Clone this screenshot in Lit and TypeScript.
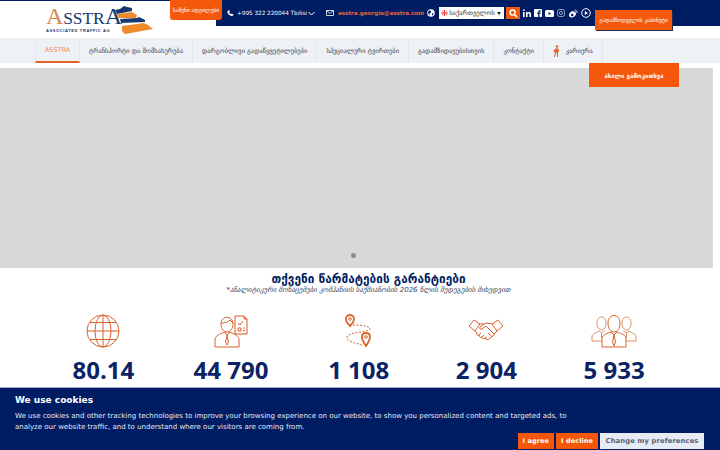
import { LitElement, html, css, svg } from "lit";
import { customElement } from "lit/decorators.js";

const stats = [
  { n: "80.14", i: "globe" },
  { n: "44 790", i: "person" },
  { n: "1 108", i: "route" },
  { n: "2 904", i: "hands" },
  { n: "5 933", i: "team" },
];
const nav = ["ტრანსპორტი და მომსახურება", "დარგობლივი გადაწყვეტილებები", "სპეციალური ტვირთები", "გადამზიდავებისთვის", "კონტაქტი"];

const icons: Record<string, unknown> = {
  globe: svg`<svg width="34" height="34" viewBox="0 0 34 34" fill="none" stroke="#d9622b" stroke-width="1"><circle cx="17" cy="17" r="16"/><ellipse cx="17" cy="17" rx="8" ry="16"/><path d="M17 1v32M1 17h32M4 8.500h26M4 25.500h26"/></svg>`,
  person: svg`<svg width="34" height="34" viewBox="0 0 34 34" fill="none" stroke="#d9622b" stroke-width="1"><path d="M1 33v-7c0-4 4-6 10-8M25 33v-7c0-4-4-6-10-8M1 33h24M11 18l2 4 2-4M13 22l-1.500 6 1.500 3 1.500-3-1.500-6M7 10c0-9 12-9 12 0 0 5-3 8-6 8s-6-3-6-8zM7 9c4 0 8-1 9-3l3 3"/><path d="M21 2h9l3 3v15H21zM30 2v3h3M24 14h3v3h-3zM29 14h2M29 16.500h2M24 9l2 2 3-4" stroke="#e0561c"/></svg>`,
  route: svg`<svg width="27" height="34" viewBox="0 0 27 34" fill="none" stroke="#d9622b" stroke-width="1"><path d="M5 1C2 1 1 3 1 5c0 3 4 7 4 7s4-4 4-7c0-2-1-4-4-4z" stroke-width="1.800"/><circle cx="5" cy="5" r="1.300"/><path d="M8 11c8 0 17 1 17 4s-22 3-23 8 10 6 15 8" stroke-dasharray="2 1.500"/><path d="M21 19c-3 0-4 2-4 4 0 3 4 9 4 9s4-6 4-9c0-2-1-4-4-4z" stroke-width="1.800"/><circle cx="21" cy="23" r="1.300"/></svg>`,
  hands: svg`<svg width="36" height="24" viewBox="0 0 36 24" fill="none" stroke="#d9622b" stroke-width="1"><path d="M1 7l5-6 6 4-5 7zM35 7l-5-6-6 4 5 7zM12 5h4l3-1 5 1M29 12l-3 3-8-8-4 3c-2 1-3-1-2-2l4-3M7 12l2 2M9 14c-1 2 1 3 2 2 0 2 2 3 3 2 0 2 2 2 3 1 1 2 3 2 4 1l6-5M13 14l-2 2M16 16l-2 2M19 18l-2 1M20 14l4 4M23 12l4 4"/></svg>`,
  team: svg`<svg width="46" height="34" viewBox="0 0 46 34" fill="none" stroke="#d9622b" stroke-width="1"><path d="M17 9c0-10 12-10 12 0 0 6-3 9-6 9s-6-3-6-9zM11 33v-9c0-3 4-4 9-6l3 3 3-3c5 2 9 3 9 6v9zM23 21l-1.500 7 1.500 4 1.500-4z"/><path d="M6 9c0-8 9-8 9 0 0 4-2 7-4.500 7S6 13 6 9zM1 27v-5c0-2 4-3 7-5l2.500 2 3-2M10.500 19v5M11 27H1M40 9c0-8-9-8-9 0 0 4 2 7 4.500 7S40 13 40 9zM45 27v-5c0-2-4-3-7-5l-2.500 2-3-2M35.500 19v5M35 27h10" stroke="#dd8c63"/></svg>`,
};

@customElement("app-root")
export class AppRoot extends LitElement {
  static styles = css`
    :host { display: block; width: 720px; height: 450px; overflow: hidden; position: relative; font-family: "DejaVu Sans", "Noto Sans", sans-serif; background: #fff; }
    * { box-sizing: border-box; }
    .header { display: flex; height: 38px; border-top: 1px solid #001d64; }
    .logo { width: 170px; padding: 6px 0 0 46px; flex: none; position: relative; }
    .wordmark { font: 400 17.500px/19px "Liberation Serif", serif; color: #17386f; letter-spacing: -0.1px; display: block; white-space: nowrap; }
    .wordmark b { font-weight: 400; font-size: 24px; }
    .wordmark .a1 { color: #d88a52; }
    .tag { display: block; margin: 1px 0 0 0; font: 700 4px/4px "Liberation Sans", sans-serif; letter-spacing: 0.620px; color: #17386f; white-space: nowrap; }
    .ship { position: absolute; left: 115px; top: 4px; }
    .quote { position: relative; z-index: 1; width: 52px; height: 20px; margin-top: -1px; background: #f4590b; color: #fff; font-size: 5.500px; display: flex; align-items: center; justify-content: center; border-radius: 0 0 3px 3px; flex: none; white-space: nowrap; }
    .right { flex: 1; position: relative; margin-left: -6px; }
    .bar { height: 26px; margin-top: -1px; background: #001d64; display: flex; align-items: center; color: #fff; font-size: 5.700px; white-space: nowrap; padding-left: 11px; }
    .phone { margin-left: 3px; }
    .chev { margin: 1px 0 0 1px; }
    .mail { margin-left: 11px; }
    .email { color: #e0623a; font-weight: 700; font-size: 5.600px; margin-left: 4px; }
    .world { margin-left: 3px; }
    .lang { width: 65px; height: 12px; margin-left: 4px; background: #fff; color: #333; font-size: 6.500px; display: flex; align-items: center; gap: 1px; padding: 0 3px 0 2px; }
    .lang .caret { margin-left: auto; width: 0; height: 0; border: 2.500px solid transparent; border-top: 3px solid #222; border-bottom: 0; }
    .search { width: 14px; height: 12px; margin-left: 2px; background: #f4590b; display: flex; align-items: center; justify-content: center; }
    .socials { display: flex; align-items: center; gap: 3px; margin-left: 3px; }
    .carrier { position: absolute; left: 379px; top: 9px; width: 77px; height: 20px; background: #f4590b; color: #fff; font-size: 5.500px; display: flex; align-items: center; justify-content: center; box-shadow: 1px 1px 0 #222b50; white-space: nowrap; }
    nav { height: 25px; background: #eef1f6; display: flex; padding-left: 35px; font-size: 6.500px; color: #3c4250; }
    nav a { display: flex; align-items: center; gap: 6px; padding: 0 9px; border-right: 1px solid #e3e7ee; white-space: nowrap; }
    nav a.on { color: #e8904f; width: 45px; justify-content: center; padding: 0; border-bottom: 2px solid #e2622a; border-left: 1px solid #e3e7ee; }
    .slider { width: 713px; height: 200px; margin-top: 5px; background: #d8d8d8; display: flex; align-items: flex-end; justify-content: center; padding-bottom: 10px; }
    .dot { width: 5px; height: 5px; border-radius: 50%; background: #8d8d8d; margin-left: -7px; }
    .neworder { position: absolute; left: 589px; top: 63px; width: 90px; height: 24px; background: #f4560a; color: #fff; font-size: 6px; font-weight: 700; display: flex; align-items: center; justify-content: center; white-space: nowrap; }
    .guar { text-align: center; padding-top: 5px; width: 737px; }
    h2 { margin: 0; font-size: 11.750px; line-height: 12px; color: #001d64; font-weight: 700; letter-spacing: 0.050px; }
    .sub { font-size: 7px; line-height: 8px; margin-top: 1px; font-style: italic; color: #333f5e; }
    .stats { display: grid; grid-template-columns: repeat(5, 127.700px); margin: 0 0 0 39.500px; padding-top: 20px; }
    .stat { display: flex; flex-direction: column; align-items: center; }
    .ic { height: 34px; display: flex; align-items: center; }
    .num { font: 700 24px/30px "Open Sans", sans-serif; color: #0b2265; margin-top: 7px; }
    .cookie { position: absolute; left: 0; right: 0; top: 387px; height: 63px; background: #001d64; border-top: 1px solid #a7aec4; color: #e6e9f2; padding: 6px 15px 0; }
    .cookie h3 { margin: 0; font-size: 9px; line-height: 12px; color: #fff; font-weight: 700; }
    .cookie p { margin: 5px 0 0; font-size: 7px; line-height: 11px; }
    .btns { position: absolute; right: 16px; bottom: 1px; display: flex; gap: 2px; }
    .btn { height: 16px; padding: 0 5px; background: #f4560a; color: #fff; font-size: 6.500px; font-weight: 700; display: flex; align-items: center; letter-spacing: 0.100px; }
    .btn.alt { background: #e6ebf5; color: #5a6275; font-size: 6.800px; padding: 0 5.500px; }
  `;

  render() {
    return html`
      <div class="header">
        <div class="logo">
          <span class="wordmark"><b class="a1">A</b>SSTR<b>A</b></span>
          <span class="tag">ASSOCIATED TRAFFIC AG</span>
          <svg class="ship" width="39" height="29" viewBox="0 0 39 29">
            <path d="M0 5l5-1 4-3 3 1 5 1v3L2 9z" fill="#17386f"/>
            <path d="M2 9l15-2 5 3-1 3-18 0z" fill="#ef8a2c"/>
            <path d="M5 14l17-1 2-1 4 2 2 1v2L6 18z" fill="#17386f"/>
            <path d="M7 21l22-3 4 2 5 4-28 5-3-3z" fill="#ef8a2c"/>
          </svg>
        </div>
        <div class="quote">საშენი ადგილები</div>
        <div class="right">
          <div class="bar">
            <svg width="7" height="8" viewBox="0 0 16 16" fill="#fff"><path d="M4 1l3 4-2 2c1 2 2 3 4 4l2-2 4 3c-1 3-4 3-6 2C5 13 2 10 1 6c0-2 1-4 3-5z"/></svg>
            <span class="phone">+995 322 220044 Tbilisi</span>
            <svg class="chev" width="7" height="5" viewBox="0 0 7 5" fill="none" stroke="#fff" stroke-width="1"><path d="M.5 1l3 3 3-3"/></svg>
            <svg class="mail" width="8" height="6" viewBox="0 0 8 6" fill="none" stroke="#fff" stroke-width=".8"><path d="M.5.500h7v5h-7zM.5.500L4 3.500 7.500.500"/></svg>
            <span class="email">asstra.georgia@asstra.com</span>
            <svg class="world" width="8" height="8" viewBox="0 0 16 16" fill="#fff"><circle cx="8" cy="8" r="7.500"/><path d="M4 3l4 1 0 3-3 2 1 4-3-3-1-4zM10 9l3-1-1 4-2 1z" fill="#001d64"/></svg>
            <div class="lang">
              <svg width="7" height="6" viewBox="0 0 7 6"><rect width="7" height="6" fill="#fff"/><path d="M3.500 0v6M0 3h7" stroke="#e03030" stroke-width="1.200"/><path d="M1 1h1M5 1h1M1 4.500h1M5 4.500h1" stroke="#e03030" stroke-width=".8"/></svg>
              <span>საქართველოს</span><span class="caret"></span>
            </div>
            <div class="search"><svg width="9" height="9" viewBox="0 0 10 10" fill="none" stroke="#fff" stroke-width="1.600"><circle cx="4" cy="4" r="2.800"/><path d="M6 6l3.200 3.200"/></svg></div>
            <div class="socials">
              <svg width="8" height="8" viewBox="0 0 8 8" fill="#fff"><path d="M0 3h1.600v5H0zM0 .5h1.600v1.600H0zM3 3h1.500v.8C5 3 7.800 2.400 8 5v3H6.400V5.500c0-1.300-1.800-1.300-1.800 0V8H3z"/></svg>
              <svg width="8" height="8" viewBox="0 0 8 8"><rect width="8" height="8" rx="1" fill="#fff"/><path d="M5.500 8V5h1l.2-1.200H5.500V3c0-.4.2-.6.6-.6h.7V1.300H5.800C4.800 1.300 4.200 2 4.200 3v.8h-1V5h1v3z" fill="#001d64"/></svg>
              <svg width="9" height="7" viewBox="0 0 9 7"><rect width="9" height="7" rx="1.500" fill="#fff"/><path d="M3.500 2v3l2.500-1.500z" fill="#001d64"/></svg>
              <svg width="8" height="8" viewBox="0 0 8 8" fill="none" stroke="#b8c0d8" stroke-width=".8"><rect x=".5" y=".5" width="7" height="7" rx="2"/><circle cx="4" cy="4" r="1.600"/></svg>
              <svg width="10" height="9" viewBox="0 0 10 9"><path d="M1 6c0-2 3-4 4-4s1 1 .8 1.500C7 3 8 3.500 8 4.800 8 6.500 6 8.500 4 8.500S1 7.500 1 6z" fill="#fff"/><circle cx="4.200" cy="6" r="1.300" fill="#001d64"/><path d="M6.500 1c2 0 3 1.500 2.700 3M6.700 2.500c1 0 1.400.6 1.300 1.400" fill="none" stroke="#fff" stroke-width=".7"/></svg>
              <svg width="10" height="10" viewBox="0 0 10 10" fill="none" stroke="#fff"><circle cx="5" cy="5" r="4.300"/><path d="M3.800 3v4L7 5z" fill="#fff" stroke="none"/></svg>
            </div>
          </div>
          <div class="carrier">გადამზიდველის კაბინეტი</div>
        </div>
      </div>
      <nav>
        <a class="on">ASSTRA</a>
        ${nav.map((n) => html`<a>${n}</a>`)}
        <a>
          <svg width="7" height="12" viewBox="0 0 7 12" fill="#e8622a"><circle cx="4" cy="1.500" r="1.300"/><path d="M2.500 3.500h3l.5 3-1 .5v5H4V8H3l-1 4H1l1-5-2-.5z"/></svg>
          კარიერა
        </a>
      </nav>
      <div class="slider"><span class="dot"></span></div>
      <div class="neworder">ახალი გამოკითხვა</div>
      <div class="guar">
        <h2>თქვენი წარმატების გარანტიები</h2>
        <div class="sub">*ანალიტიკური მონაცემები კომპანიის საქმიანობის 2026 წლის შედეგების მიხედვით</div>
      </div>
      <div class="stats">
        ${stats.map((s) => html`<div class="stat"><div class="ic">${icons[s.i]}</div><div class="num">${s.n}</div></div>`)}
      </div>
      <div class="cookie">
        <h3>We use cookies</h3>
        <p>We use cookies and other tracking technologies to improve your browsing experience on our website, to show you personalized content and targeted ads, to<br />analyze our website traffic, and to understand where our visitors are coming from.</p>
        <div class="btns"><span class="btn">I agree</span><span class="btn">I decline</span><span class="btn alt">Change my preferences</span></div>
      </div>
    `;
  }
}
